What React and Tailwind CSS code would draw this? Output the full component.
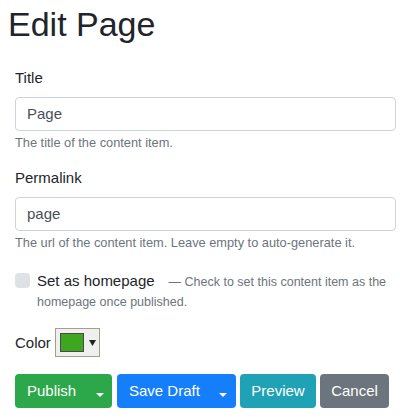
export default function App() {
  const Caret = ({ cls }) => (
    <svg width="8" height="4" viewBox="0 0 8 4" className={cls}>
      <path d="M0 0 L8 0 L4 4 Z" fill="white" />
    </svg>
  );
  return (
    <div className="w-[400px] h-[420px] bg-white text-[#212529] font-['Liberation_Sans',Arial,sans-serif] overflow-hidden">
      <h1 className="pl-[8px] pt-[4px] text-[34px] leading-[41px] font-normal">Edit Page</h1>
      <div className="pl-[15px] pr-[4px] pt-[22px]">
        <div>
          <label className="block text-[15px] leading-[22px]">Title</label>
          <div className="mt-[8px] h-[34px] border border-[#ced4da] rounded-[4px] px-[11px] flex items-center text-[15px] text-[#495057]">
            Page
          </div>
          <p className="mt-[3px] text-[12.8px] leading-[18px] text-[#6c757d]">The title of the content item.</p>
        </div>
        <div className="mt-[15px]">
          <label className="block text-[15px] leading-[22px]">Permalink</label>
          <div className="mt-[8px] h-[34px] border border-[#ced4da] rounded-[4px] px-[11px] flex items-center text-[15px] text-[#495057]">
            page
          </div>
          <p className="mt-[3px] text-[12.8px] leading-[18px] text-[#6c757d]">
            The url of the content item. Leave empty to auto-generate it.
          </p>
        </div>
        <div className="mt-[19px] flex items-start">
          <div className="mt-[2px] w-[15px] h-[15px] shrink-0 rounded-[4px] bg-[#dee2e6]"></div>
          <div className="ml-[7px] text-[15px] leading-[20px]">
            <span>Set as homepage</span>
            <span className="ml-[14px] text-[12.5px] leading-none text-[#6c757d]">
              — Check to set this content item as the homepage once published.
            </span>
          </div>
        </div>
        <div className="mt-[17px] flex items-center">
          <span className="text-[15px] leading-[22px]">Color</span>
          <div className="ml-[4px] w-[45px] h-[29px] border border-[#a99c89] bg-[#efefef] flex items-center pl-[4px]">
            <div className="w-[24px] h-[19px] border border-[#4a4a4a] bg-[#3fa61f]"></div>
            <svg width="7" height="6" viewBox="0 0 7 6" className="ml-[5px] mt-[1px]">
              <path d="M0 0 L7 0 L3.5 6 Z" fill="#222" />
            </svg>
          </div>
        </div>
        <div className="mt-[17px] flex items-center text-[15px] text-white">
          <div className="shrink-0 w-[97px] h-[34px] rounded-[4px] bg-[#2ca74a] flex items-center justify-between pl-[12px] pr-[8px]">
            <span>Publish</span>
            <Caret cls="mt-[8px]" />
          </div>
          <div className="shrink-0 ml-[5px] w-[119px] h-[34px] rounded-[4px] bg-[#157ffb] flex items-center justify-between pl-[12px] pr-[9px]">
            <span>Save Draft</span>
            <Caret cls="mt-[8px]" />
          </div>
          <div className="shrink-0 ml-[4px] w-[76px] h-[34px] rounded-[4px] bg-[#20a2b6] flex items-center justify-center">
            Preview
          </div>
          <div className="shrink-0 ml-[4px] w-[69px] h-[34px] rounded-[4px] bg-[#6c747d] flex items-center justify-center">
            Cancel
          </div>
        </div>
      </div>
    </div>
  );
}
